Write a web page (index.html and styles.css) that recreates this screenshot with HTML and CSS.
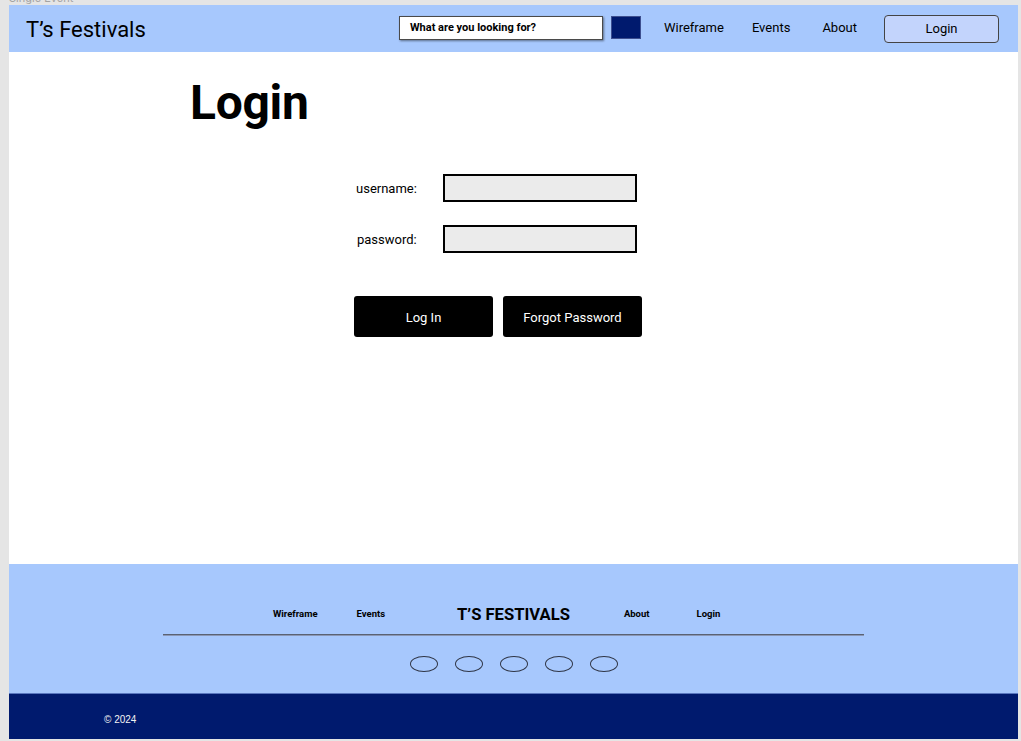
FILE: index.html
```html
<!DOCTYPE html>
<html lang="en">
<head>
<meta charset="utf-8">
<title>Login</title>
<link rel="stylesheet" href="styles.css">
</head>
<body>
<div class="canvas-label">Single Event</div>
<div class="frame">
  <header class="topbar">
    <div class="logo">T’s Festivals</div>
    <div class="search">What are you looking for?</div>
    <div class="search-btn"></div>
    <nav class="nav">
      <span class="nav-wire">Wireframe</span>
      <span class="nav-events">Events</span>
      <span class="nav-about">About</span>
    </nav>
    <div class="login-btn">Login</div>
  </header>

  <main class="content">
    <h1 class="title">Login</h1>
    <div class="form">
      <label class="lbl">username:</label>
      <div class="field"></div>
      <label class="lbl lbl-pw">password:</label>
      <div class="field"></div>
    </div>
    <div class="actions">
      <div class="btn">Log In</div>
      <div class="btn">Forgot Password</div>
    </div>
  </main>

  <footer class="footer">
    <div class="footer-inner">
      <div class="footer-links">
        <span class="fl fl-wire">Wireframe</span>
        <span class="fl fl-events">Events</span>
        <span class="footer-title">T’S FESTIVALS</span>
        <span class="fl fl-about">About</span>
        <span class="fl fl-login">Login</span>
      </div>
      <div class="footer-rule"></div>
      <div class="socials">
        <span class="oval"></span>
        <span class="oval"></span>
        <span class="oval"></span>
        <span class="oval"></span>
        <span class="oval"></span>
      </div>
    </div>
  </footer>
  <div class="bottombar">© 2024</div>
</div>
</body>
</html>
```

FILE: styles.css
```css
* { box-sizing: border-box; }

html, body {
  margin: 0;
  padding: 0;
}

body {
  background: #e5e5e5;
  font-family: Roboto, "Liberation Sans", Arial, sans-serif;
  color: #000;
  width: 1021px;
  height: 741px;
  overflow: hidden;
  position: relative;
}

.canvas-label {
  position: absolute;
  left: 9px;
  top: -9px;
  font-family: Inter, Roboto, sans-serif;
  font-size: 11px;
  color: #a3a3a3;
}

.frame {
  margin: 5px 0 0 9px;
  width: 1009px;
  height: 734px;
  background: #fff;
  display: flex;
  flex-direction: column;
}

/* Header */
.topbar {
  height: 47px;
  background: #a7c8fd;
  display: flex;
  align-items: center;
  padding: 0 19px 0 17px;
  flex: none;
}

.logo {
  font-size: 22px;
  font-weight: 400;
  margin-top: 1px;
}

.search {
  margin-left: auto;
  width: 204px;
  height: 24px;
  background: #fff;
  border: 1px solid #4a4a4a;
  box-shadow: 1px 1px 2px rgba(0, 0, 0, 0.45);
  font-size: 11px;
  font-weight: 700;
  padding-left: 10px;
  display: flex;
  align-items: center;
  margin-top: -2px;
}

.search-btn {
  width: 30px;
  height: 23px;
  background: #001a6e;
  border: 1px solid #3d4f8f;
  margin-left: 8px;
  margin-top: -2px;
}

.nav {
  display: flex;
  margin-left: 23px;
  font-size: 13px;
  margin-top: -2px;
}

.nav-events { margin-left: 28px; }
.nav-about { margin-left: 32px; }

.login-btn {
  margin-left: 27px;
  width: 115px;
  height: 28px;
  background: #c3d4fc;
  border: 1px solid #444;
  border-radius: 4px;
  font-size: 13px;
  display: flex;
  align-items: center;
  justify-content: center;
}

/* Content */
.content {
  height: 512px;
  flex: none;
  padding-top: 27px;
}

.title {
  margin: 0 0 0 181px;
  font-size: 48px;
  line-height: 48px;
  font-weight: 700;
  letter-spacing: -0.3px;
}

.form {
  margin: 47px 0 0 345px;
  display: grid;
  grid-template-columns: 89px 194px;
  row-gap: 23px;
  align-items: center;
}

.lbl {
  font-size: 13px;
  padding-left: 2px;
}

.lbl-pw {
  padding-left: 3px;
}

.field {
  height: 28px;
  background: #ebebeb;
  border: 2px solid #000;
}

.actions {
  margin: 43px 0 0 345px;
  display: flex;
  gap: 10px;
}

.btn {
  width: 139px;
  height: 41px;
  background: #000;
  color: #fff;
  border-radius: 3px;
  font-size: 13px;
  display: flex;
  align-items: center;
  justify-content: center;
  padding-top: 1px;
}

/* Footer */
.footer {
  height: 129px;
  background: #a7c8fd;
  flex: none;
  padding-top: 39px;
}

.footer-inner {
  width: 701px;
  margin: 0 auto;
}

.footer-links {
  height: 20px;
  display: flex;
  align-items: center;
}

.fl {
  font-size: 9.5px;
  font-weight: 700;
}

.fl-wire { margin-left: 110px; }
.fl-events { margin-left: 39px; }
.fl-about { margin-left: 54px; }
.fl-login { margin-left: 47px; }

.footer-title {
  margin-left: 72px;
  font-size: 16.6px;
  font-weight: 700;
  margin-top: 3px;
}

.footer-rule {
  margin-top: 11px;
  height: 2px;
  background: linear-gradient(#5a6273 50%, #8a97b5 50%);
}

.socials {
  margin-top: 20px;
  display: flex;
  justify-content: center;
  gap: 17px;
  padding-left: 1px;
}

.oval {
  width: 28px;
  height: 16px;
  border: 1px solid #2f3545;
  border-radius: 50%;
}

.bottombar {
  height: 46px;
  flex: none;
  background: #001a6e;
  border-top: 1px solid #5a78c0;
  color: #f2f2f2;
  font-family: "Liberation Sans", Arial, sans-serif;
  font-size: 10px;
  padding: 20px 0 0 95px;
}
```
